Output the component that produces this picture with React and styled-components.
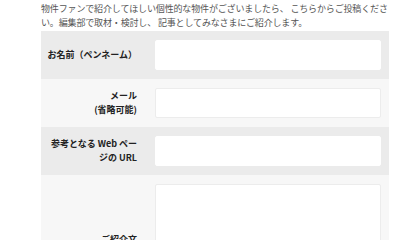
import styled, { createGlobalStyle } from "styled-components";

const Global = createGlobalStyle`
body {
  margin: 0;
  background: #fff;
  font-family: "Noto Sans CJK JP", "Noto Sans", sans-serif;
}
`;

const Page = styled.div`
width: 348px;
margin-left: 41px;
`;

const Intro = styled.p`
margin: 0;
padding-top: 2px;
font-size: 9px;
line-height: 14px;
letter-spacing: -0.15px;
color: #555;
height: 29px;
`;

const Form = styled.div`
display: flex;
flex-direction: column;
`;

const Row = styled.div`
display: flex;
align-items: center;
padding: 9px 8px 9px 0;
background: ${(p) => (p.$light ? "#f7f7f7" : "#ebebeb")};
`;

const Label = styled.div`
width: 114px;
flex: none;
box-sizing: border-box;
padding: 0 18px 0 6px;
text-align: right;
font-size: 9px;
line-height: 14px;
font-weight: 700;
color: #222;
white-space: ${(p) => (p.$nowrap ? "nowrap" : "normal")};
`;

const Input = styled.div`
flex: 1;
height: ${(p) => p.$h || 30}px;
box-sizing: border-box;
background: #fff;
border: 1px solid ${(p) => (p.$light ? "#ececec" : "#fff")};
border-radius: 2px;
`;

const App = () => {
  return (
    <>
      <Global />
      <Page>
        <Intro>
          物件ファンで紹介してほしい個性的な物件がございましたら、 こちらからご投稿ください。編集部で取材・検討し、 記事としてみなさまにご紹介します。
        </Intro>
        <Form>
          <Row>
            <Label $nowrap>お名前（ペンネーム）</Label>
            <Input />
          </Row>
          <Row $light>
            <Label>
              メール
              <br />
              (省略可能)
            </Label>
            <Input $light />
          </Row>
          <Row>
            <Label>参考となる Web ページの URL</Label>
            <Input />
          </Row>
          <Row $light>
            <Label>ご紹介文</Label>
            <Input $light $h={112} />
          </Row>
        </Form>
      </Page>
    </>
  );
};

export default App;
